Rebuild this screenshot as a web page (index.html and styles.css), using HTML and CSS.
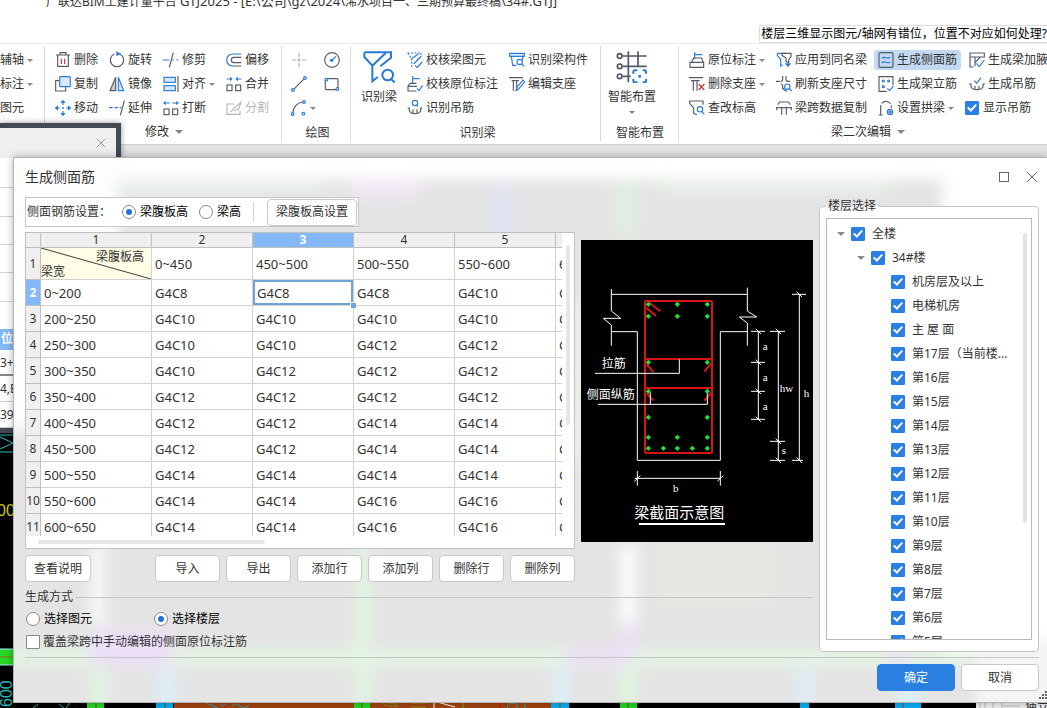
FILE: index.html
```html
<!DOCTYPE html>
<html lang="zh-CN">
<head>
<meta charset="utf-8">
<title>广联达BIM土建计量平台 GTJ2025</title>
<link rel="stylesheet" href="styles.css">
</head>
<body>
<div class="app">
  <header class="titlebar">
    <div class="caption">广联达BIM土建计量平台 <span class="path">GTJ2025 - [E:\公司\gz\2024\</span>浠水项目一、三期预算最终稿<span class="path">\34#.GTJ]</span></div>
    <a class="help" href="#">楼层三维显示图元/轴网有错位，位置不对应如何处理?</a>
  </header>

  <nav class="ribbon">
    <section class="group g-axis">
      <div class="tools">
        <button class="tool">辅轴<i class="caret"></i></button>
        <button class="tool">标注<i class="caret"></i></button>
        <button class="tool">图元</button>
      </div>
    </section>

    <section class="group g-edit">
      <div class="tools">
        <button class="tool"><svg class="ico" viewBox="0 0 48 48"><path d="M3 9H45M15 9V2H33V9M8 9V43H40V9"/><path class="r" d="M19 20V36M29 20V36"/></svg>删除</button>
        <button class="tool"><svg class="ico" viewBox="0 0 48 48"><path d="M32 6A20 20 0 1 1 16 6"/><path class="bf" d="M22 -2L36 5L22 13Z"/></svg>旋转</button>
        <button class="tool"><svg class="ico" viewBox="0 0 48 48"><path d="M31 2L19 46"/><path class="b" d="M0 24H19M27 24H33M40 24H46"/></svg>修剪</button>
        <button class="tool"><svg class="ico" viewBox="0 0 48 48"><path class="b" d="M46 6H20A18 18 0 0 0 20 42"/><path d="M46 16H24A8 8 0 0 0 24 32H46M20 42H46"/></svg>偏移</button>
        <button class="tool"><svg class="ico" viewBox="0 0 48 48"><path d="M13 14H2V45H32V33"/><rect class="b lf" x="14" y="2" width="32" height="30" rx="3"/></svg>复制</button>
        <button class="tool"><svg class="ico" viewBox="0 0 48 48"><path class="gf" d="M20 4V44H3Z"/><path class="b lf" d="M28 4V44H44Z"/></svg>镜像</button>
        <button class="tool"><svg class="ico" viewBox="0 0 48 48"><path d="M45 0V48"/><rect class="b lf" x="3" y="4" width="34" height="15"/><rect class="b lf" x="3" y="29" width="34" height="15"/></svg>对齐<i class="caret"></i></button>
        <button class="tool"><svg class="ico" viewBox="0 0 48 48"><rect x="3" y="27" width="15" height="17"/><rect x="29" y="27" width="15" height="17"/><path class="b" d="M2 9H15M46 9H33"/><path class="bf" d="M12 2L20 9L12 16ZM36 2L28 9L36 16Z"/></svg>合并</button>
        <button class="tool"><svg class="ico" viewBox="0 0 48 48"><path class="b" d="M24 4V15M24 33V44M4 24H15M33 24H44"/><path class="bf" d="M24 -1L32 9H16ZM24 49L32 39H16ZM-1 24L9 16V32ZM49 24L39 16V32Z"/><circle class="bf" cx="24" cy="24" r="3"/></svg>移动</button>
        <button class="tool"><svg class="ico" viewBox="0 0 48 48"><path d="M46 2L34 46"/><path class="b" d="M0 23H11M17 23H27M32 23H37"/></svg>延伸</button>
        <button class="tool"><svg class="ico" viewBox="0 0 48 48"><rect x="3" y="27" width="15" height="17"/><rect x="29" y="27" width="15" height="17"/><path class="b" d="M6 9H20M42 9H28"/><path class="bf" d="M8 2L0 9L8 16ZM40 2L48 9L40 16Z"/></svg>打断</button>
        <button class="tool" disabled><svg class="ico off" viewBox="0 0 48 48"><path d="M24 12H3V43H42V32M14 36C20 30 20 24 30 20L45 7L38 28L24 32"/></svg>分割</button>
      </div>
      <button class="name">修改<i class="caret big"></i></button>
    </section>

    <section class="group g-draw">
      <div class="tools">
        <button class="tool" aria-label="点"><svg class="ico off" viewBox="0 0 48 48"><path d="M24 2V16M24 32V46M2 24H16M32 24H46"/><circle cx="24" cy="24" r="3"/></svg></button>
        <button class="tool" aria-label="圆"><svg class="ico" viewBox="0 0 48 48"><circle cx="24" cy="24" r="22"/><path class="b" d="M24 24L36 13"/><circle class="bf" cx="23" cy="25" r="5"/></svg></button>
        <button class="tool" aria-label="直线"><svg class="ico" viewBox="0 0 48 48"><path d="M8 40L40 8"/><circle class="b wf" cx="6" cy="42" r="4"/><circle class="b wf" cx="42" cy="6" r="4"/></svg></button>
        <button class="tool" aria-label="矩形"><svg class="ico" viewBox="0 0 48 48"><rect x="4" y="8" width="38" height="33" rx="3"/><circle class="b wf" cx="7" cy="11" r="4"/><circle class="b wf" cx="40" cy="39" r="4"/></svg></button>
        <button class="tool" aria-label="弧"><svg class="ico" viewBox="0 0 48 48"><path d="M5 40C6 22 18 8 36 6"/><circle class="b wf" cx="5" cy="42" r="4"/><circle class="b wf" cx="39" cy="6" r="4"/><circle class="b wf" cx="37" cy="41" r="4"/></svg><i class="caret"></i></button>
      </div>
      <span class="name">绘图</span>
    </section>

    <section class="group g-ident">
      <div class="split">
        <button class="bigtool"><svg class="bigico" viewBox="0 0 96 96"><path class="b2" d="M4 4H84V20L52 46M4 4V18L28 44V91L44 78M28 44L68 6"/><circle class="b2" cx="74" cy="72" r="16"/><path class="b2" d="M84 84L95 94"/></svg>识别梁</button>
        <div class="tools">
          <button class="tool"><svg class="ico" viewBox="0 0 48 48"><path class="b" stroke-dasharray="6 4" d="M2 3H42V14L28 24M2 3L14 20V44"/><path class="b" d="M14 20L34 6M20 36L42 14M24 40L31 46L45 30"/></svg>校核梁图元</button>
          <button class="tool"><svg class="ico" viewBox="0 0 48 48"><path class="b lf" d="M2 4H46V13H2Z"/><path class="b" d="M7 13L11 40H22M42 13L40 24"/><circle class="b" cx="32" cy="30" r="8"/><path class="b" d="M38 36L45 43"/></svg>识别梁构件</button>
          <button class="tool"><svg class="ico" viewBox="0 0 48 48"><path class="b" d="M17 22V0M17 8H38"/><path d="M28 22H10L3 30V45H28M3 31H30"/><path class="b" d="M30 37L36 44L47 28"/></svg>校核原位标注</button>
          <button class="tool"><svg class="ico" viewBox="0 0 48 48"><path d="M0 5H42M8 14H30M13 14V44M23 14V44"/><path class="b" d="M42 12L47 18L28 40L21 43L24 34Z"/></svg>编辑支座</button>
          <button class="tool"><svg class="ico" viewBox="0 0 48 48"><circle class="b" cx="24" cy="9" r="8"/><path class="b" d="M28 15L33 20"/><path d="M2 24H7V32C10 44 38 44 41 32V24H46M18 28V42M30 28V42"/></svg>识别吊筋</button>
        </div>
      </div>
      <span class="name">识别梁</span>
    </section>

    <section class="group g-smart">
      <button class="bigtool"><svg class="bigico" viewBox="0 0 96 96"><path class="g2" d="M20 15H92M20 46H92M20 76H44M37 1V94M66 1V46"/><circle class="g2 wf" cx="11" cy="15" r="7"/><circle class="g2 wf" cx="11" cy="46" r="7"/><circle class="g2 wf" cx="11" cy="76" r="7"/><path class="b2" d="M64 58H56Q52 58 52 62V68M80 58H86Q90 58 90 62V68M52 84V90Q52 94 56 94H64M90 84V90Q90 94 86 94H80M71 72V80M67 76H75"/></svg>智能布置<i class="caret"></i></button>
      <span class="name">智能布置</span>
    </section>

    <section class="group g-beam">
      <div class="tools">
        <button class="tool"><svg class="ico" viewBox="0 0 48 48"><path class="b" d="M17 22V0M17 8H40"/><path d="M8 30L14 18H38L42 30M3 31H44V46H3Z"/></svg>原位标注<i class="caret"></i></button>
        <button class="tool"><svg class="ico" viewBox="0 0 48 48"><path class="b" d="M30 4H4V10L14 22V42L20 38"/><path d="M18 4H45V14L38 24V32L30 28V18L18 10Z"/><path class="bf" d="M26 34H46L36 46Z"/></svg>应用到同名梁</button>
        <button class="tool on"><svg class="ico" viewBox="0 0 48 48"><rect x="3" y="2" width="42" height="44" rx="4"/><path class="b" d="M11 19Q18 14 24 17T37 16M11 33Q18 28 24 31T37 30"/></svg>生成侧面筋</button>
        <button class="tool"><svg class="ico" viewBox="0 0 48 48"><path d="M14 45H3V3H46V15H3M18 15V43M34 15L18 32"/><path class="b" d="M22 34L31 44L46 24"/></svg>生成梁加腋</button>
        <button class="tool"><svg class="ico" viewBox="0 0 48 48"><path d="M0 5H42M6 14H32M13 14V44M24 14V44"/><path class="r" d="M29 24L46 42M46 24L29 42"/></svg>删除支座<i class="caret"></i></button>
        <button class="tool"><svg class="ico" viewBox="0 0 48 48"><path d="M0 16H12M20 0V10Q20 16 14 16M30 0V10Q30 16 36 16H42M20 40V30Q20 24 14 24"/><circle class="b" cx="34" cy="32" r="8"/><path class="b" d="M40 38L47 45M22 36Q24 45 33 45"/></svg>刷新支座尺寸</button>
        <button class="tool"><svg class="ico" viewBox="0 0 48 48"><path d="M26 46H3V2H45V28"/><circle class="b" cx="16" cy="15" r="3"/><circle class="b" cx="32" cy="15" r="3"/><circle class="b" cx="16" cy="32" r="3"/><path class="b" d="M28 37L35 44L46 30"/></svg>生成架立筋</button>
        <button class="tool"><svg class="ico" viewBox="0 0 48 48"><path d="M0 24H6V32C9 44 39 44 42 32V24H48M18 30V42M30 30V42"/><path class="b" d="M16 14L23 22L36 5"/></svg>生成吊筋</button>
        <button class="tool"><svg class="ico" viewBox="0 0 48 48"><path d="M24 44L14 40V24L2 10V3H42V14"/><circle class="b" cx="33" cy="28" r="8"/><path class="b" d="M38 34L46 43"/></svg>查改标高</button>
        <button class="tool"><svg class="ico" viewBox="0 0 48 48"><path d="M5 14L11 6H37L43 14M0 23H48M17 24V44M31 24V44M2 24V31M46 24V31"/></svg>梁跨数据复制</button>
        <button class="tool"><svg class="ico" viewBox="0 0 48 48"><path stroke-dasharray="30 5" d="M8 45V20A16 16 0 0 1 40 20V24M2 45H14"/><circle class="b lf" cx="36" cy="36" r="8"/><circle class="b" cx="36" cy="36" r="3"/></svg>设置拱梁<i class="caret"></i></button>
        <label class="check"><input type="checkbox" checked>显示吊筋</label>
      </div>
      <button class="name">梁二次编辑<i class="caret big"></i></button>
    </section>
  </nav>

  <main class="workspace">
    <svg class="canvas" viewBox="0 145 1047 563" preserveAspectRatio="xMinYMin slice">
      <rect x="0" y="145" width="1047" height="563" fill="#000"/>
      <g fill="none" stroke="#28c4c4"><path d="M0 435H14M0 452H14M0 437L13 443L0 449"/></g>
      <text class="cad yellow" x="-3" y="516">00</text>
      <rect x="-2" y="649" width="22" height="16" fill="#25d825" stroke="#a0f0ff"/><path d="M0 657H20" stroke="#8a7010"/>
      <text class="cad cyan" transform="translate(12 707) rotate(-90)">600</text>
      <g fill="none" stroke="#28a8a8"><path d="M33 708L38 704M59 704L64 708M70 703L66 708"/></g>
      <rect x="174" y="700" width="378" height="8" fill="#a24410"/>
      <g fill="#25d825"><rect x="87" y="700" width="17" height="8"/><rect x="354" y="700" width="16" height="8"/><rect x="620" y="700" width="17" height="8"/></g>
      <g fill="#08b0f4"><rect x="156" y="700" width="17" height="8"/><rect x="551" y="700" width="18" height="8"/><rect x="800" y="700" width="9" height="8"/><rect x="895" y="700" width="26" height="8"/></g>
      <path d="M96 702V708M362 702V708M628 702V708M165 702V708M560 702V708M903 702V708" stroke="#785020"/>
      <path d="M434 702V708M437 702L455 707" stroke="#fff"/>
      <path d="M463 702V708" stroke="#4c0"/><path d="M225 702V708M500 702V708" stroke="#e00"/>
      <g fill="none" stroke="#28a8a8"><path d="M206 703L218 708M220 704Q222 708 226 704M232 706Q235 702 240 706T249 705M507 708Q508 703 513 703T517 708M525 703V708"/></g>
      <g fill="none" stroke="#889010"><path d="M383 703Q384 707 399 706M388 703H396V707M410 703H426M411 707H426"/></g>
      <rect x="976" y="700" width="71" height="8" fill="#f0f0f0"/>
      <path d="M980 702V708M985 702V708M993 702V708M1002 702V708M1002 706H1020" stroke="#bbb"/>
      <text class="dock" x="1025" y="712">独立</text>
    </svg>
  </main>
</div>

<aside class="panel">
  <div class="panel-head"><button class="close" aria-label="关闭"><svg viewBox="0 0 12 12"><path d="M2 2L10 10M10 2L2 10"/></svg></button></div>
  <div class="panel-lines"><span></span><span></span><span></span><span></span><span></span><span></span></div>
  <div class="panel-col">位</div>
  <div class="panel-row strong">3+</div>
  <div class="panel-row">4,E</div>
  <div class="panel-row">39;</div>
</aside>

<div class="dialog" role="dialog" aria-labelledby="dlg-title">
  <svg class="glass" viewBox="13 157 1034 545" preserveAspectRatio="none" aria-hidden="true">
    <defs><filter id="soft" x="-10%" y="-10%" width="120%" height="120%"><feGaussianBlur stdDeviation="7"/></filter></defs>
    <rect x="13" y="157" width="1034" height="545" fill="#e4e4e4"/>
    <g filter="url(#soft)">
      <rect x="-20" y="130" width="1100" height="48" fill="#fff"/>
      <rect x="-20" y="130" width="138" height="300" fill="#fdfdfe"/>
      <rect x="942" y="130" width="140" height="520" fill="#fff"/>
      <rect x="975" y="640" width="90" height="90" fill="#f4f4f4"/>
      <rect x="120" y="180" width="200" height="12" fill="#e9f1e9"/>
      <rect x="350" y="178" width="70" height="18" fill="#f1e8f4"/>
      <rect x="495" y="185" width="14" height="60" fill="#dfe4f6"/>
      <rect x="620" y="176" width="14" height="60" fill="#e0f2e0"/>
      <rect x="660" y="178" width="230" height="14" fill="#e8efe8"/>
      <rect x="565" y="300" width="20" height="160" fill="#e8f2e8"/>
      <rect x="90" y="545" width="14" height="80" fill="#fafafa"/>
      <rect x="620" y="545" width="16" height="80" fill="#fdfdfc"/>
      <rect x="355" y="545" width="14" height="160" fill="#e2f6e2"/>
      <rect x="660" y="545" width="110" height="60" fill="#e7e8e2"/>
      <rect x="-20" y="650" width="990" height="15" fill="#e4f6e4"/>
      <rect x="90" y="630" width="80" height="34" fill="#ecdff8"/>
      <rect x="565" y="650" width="60" height="14" fill="#ecdff8"/>
      <rect x="621" y="624" width="14" height="34" fill="#ecdff8"/>
      <rect x="890" y="650" width="18" height="12" fill="#ecdff8"/>
      <rect x="90" y="668" width="14" height="50" fill="#e0f6e0"/>
      <rect x="620" y="668" width="16" height="50" fill="#e0f6e0"/>
      <rect x="158" y="668" width="14" height="50" fill="#dcf1fb"/>
      <rect x="554" y="668" width="14" height="50" fill="#dcf1fb"/>
      <rect x="798" y="668" width="12" height="50" fill="#dcf1fb"/>
      <rect x="898" y="668" width="20" height="50" fill="#dcf1fb"/>
    </g>
  </svg>

  <header class="dlg-head">
    <h1 id="dlg-title">生成侧面筋</h1>
    <button class="winbtn" aria-label="最大化"><svg viewBox="0 0 24 24"><rect x="3" y="3" width="18" height="18"/></svg></button>
    <button class="winbtn" aria-label="关闭"><svg viewBox="0 0 24 24"><path d="M2 2L22 22M22 2L2 22"/></svg></button>
  </header>

  <div class="dlg-body">
    <div class="left">
      <div class="settings">
        <span class="lead">侧面钢筋设置：</span>
        <label class="opt"><input type="radio" name="by" checked>梁腹板高</label>
        <label class="opt"><input type="radio" name="by">梁高</label>
        <span class="rule"></span>
        <button class="btn">梁腹板高设置</button>
      </div>

      <div class="pair">
        <div class="sheet">
          <div class="scroller">
            <table>
              <colgroup><col class="c0"><col class="c1"><col><col><col><col><col></colgroup>
              <thead><tr><th></th><th>1</th><th>2</th><th class="cur">3</th><th>4</th><th>5</th><th>6</th></tr></thead>
              <tbody>
                <tr class="tall"><th>1</th><td class="diag"><div><span>梁腹板高</span><span>梁宽</span></div></td><td>0~450</td><td>450~500</td><td>500~550</td><td>550~600</td><td>600~650</td></tr>
                <tr><th class="cur">2</th><td>0~200</td><td>G4C8</td><td class="sel">G4C8</td><td>G4C8</td><td>G4C10</td><td>G4C10</td></tr>
                <tr><th>3</th><td>200~250</td><td>G4C10</td><td>G4C10</td><td>G4C10</td><td>G4C10</td><td>G4C10</td></tr>
                <tr><th>4</th><td>250~300</td><td>G4C10</td><td>G4C10</td><td>G4C12</td><td>G4C12</td><td>G4C12</td></tr>
                <tr><th>5</th><td>300~350</td><td>G4C10</td><td>G4C12</td><td>G4C12</td><td>G4C12</td><td>G4C12</td></tr>
                <tr><th>6</th><td>350~400</td><td>G4C12</td><td>G4C12</td><td>G4C12</td><td>G4C12</td><td>G4C12</td></tr>
                <tr><th>7</th><td>400~450</td><td>G4C12</td><td>G4C12</td><td>G4C14</td><td>G4C14</td><td>G4C14</td></tr>
                <tr><th>8</th><td>450~500</td><td>G4C12</td><td>G4C12</td><td>G4C14</td><td>G4C14</td><td>G4C14</td></tr>
                <tr><th>9</th><td>500~550</td><td>G4C14</td><td>G4C14</td><td>G4C14</td><td>G4C14</td><td>G4C14</td></tr>
                <tr><th>10</th><td>550~600</td><td>G4C14</td><td>G4C14</td><td>G4C16</td><td>G4C16</td><td>G4C16</td></tr>
                <tr><th>11</th><td>600~650</td><td>G4C14</td><td>G4C14</td><td>G4C16</td><td>G4C16</td><td>G4C16</td></tr>
              </tbody>
            </table>
          </div>
          <div class="vbar"><span></span></div>
          <div class="hbar"><span></span></div>
        </div>

        <svg class="diagram" viewBox="9 15 696 906" role="img" aria-label="梁截面示意图">
          <rect x="9" y="15" width="696" height="906" fill="#000"/>
          <g fill="none" stroke="#fff" stroke-width="3">
            <path d="M100 178H508M100 162V228L128 250H76L100 270V332M508 158V228L536 246H484L508 264V332M100 290H178V676H427V290H508"/>
            <path d="M541 289V553M601 289V676M664 178V676M519 289H561M519 382H561M519 469H561M519 553H561M576 289H621M576 619H621M576 676H621M642 178H684M642 676H675"/>
            <path d="M533 281L549 297M533 374L549 390M533 461L549 477M533 545L549 561M593 281L609 297M593 611L609 627M593 668L609 684M656 170L672 186M656 668L672 684"/>
            <path d="M178 708V752M427 708V752M170 730H427M169 739L187 722M418 739L436 722"/>
          </g>
          <g fill="none" stroke="#d81414" stroke-width="6">
            <rect x="201" y="198" width="201" height="456" rx="3"/>
            <path d="M201 372H402M201 459H402M214 203L247 229M205 218L234 243M206 388L226 411M399 386L379 410M206 475L226 497M399 474L379 497"/>
          </g>
          <g fill="none" stroke="#fff" stroke-width="3"><path d="M51 415H304V372M60 508H388V472M217 508V472"/></g>
          <g fill="#20e030">
            <path id="bar" d="M211 200L219 208L211 216L203 208Z"/>
            <use href="#bar" x="87"/><use href="#bar" x="177"/>
            <use href="#bar" y="36"/><use href="#bar" x="87" y="36"/><use href="#bar" x="177" y="36"/>
            <use href="#bar" y="174"/><use href="#bar" x="177" y="174"/>
            <use href="#bar" y="261"/><use href="#bar" x="177" y="261"/>
            <use href="#bar" y="339"/><use href="#bar" x="177" y="339"/>
            <use href="#bar" y="399"/><use href="#bar" x="87" y="399"/><use href="#bar" x="177" y="399"/>
            <use href="#bar" y="432"/><use href="#bar" x="45" y="432"/><use href="#bar" x="87" y="432"/><use href="#bar" x="132" y="432"/><use href="#bar" x="177" y="432"/>
          </g>
          <g class="note"><text x="71" y="399">拉筋</text><text x="26" y="492">侧面纵筋</text></g>
          <text class="fig" x="169" y="849">梁截面示意图</text>
          <path d="M183 867H441" stroke="#fff" stroke-width="6"/>
          <g class="dim"><text x="554" y="345">a</text><text x="554" y="438">a</text><text x="554" y="525">a</text><text x="605" y="472">hw</text><text x="677" y="487">h</text><text x="611" y="656">s</text><text x="285" y="770">b</text></g>
        </svg>
      </div>

      <div class="actions">
        <button class="btn">查看说明</button>
        <span class="spring"></span>
        <button class="btn">导入</button>
        <button class="btn">导出</button>
        <button class="btn">添加行</button>
        <button class="btn">添加列</button>
        <button class="btn">删除行</button>
        <button class="btn">删除列</button>
      </div>

      <div class="mode" role="group" aria-labelledby="mode-name">
        <div class="mode-head"><span id="mode-name">生成方式</span></div>
        <div class="mode-row">
          <label class="opt"><input type="radio" name="mode">选择图元</label>
          <label class="opt"><input type="radio" name="mode" checked>选择楼层</label>
        </div>
        <label class="check"><input type="checkbox">覆盖梁跨中手动编辑的侧面原位标注筋</label>
      </div>
    </div>

    <fieldset class="floors">
      <legend>楼层选择</legend>
      <div class="tree">
        <ul>
          <li><i class="caret big"></i><label class="check"><input type="checkbox" checked>全楼</label></li>
          <li class="l2"><i class="caret big"></i><label class="check"><input type="checkbox" checked>34#楼</label></li>
          <li class="l3"><label class="check"><input type="checkbox" checked>机房层及以上</label></li>
          <li class="l3"><label class="check"><input type="checkbox" checked>电梯机房</label></li>
          <li class="l3"><label class="check"><input type="checkbox" checked>主 屋 面</label></li>
          <li class="l3"><label class="check"><input type="checkbox" checked>第17层（当前楼...</label></li>
          <li class="l3"><label class="check"><input type="checkbox" checked>第16层</label></li>
          <li class="l3"><label class="check"><input type="checkbox" checked>第15层</label></li>
          <li class="l3"><label class="check"><input type="checkbox" checked>第14层</label></li>
          <li class="l3"><label class="check"><input type="checkbox" checked>第13层</label></li>
          <li class="l3"><label class="check"><input type="checkbox" checked>第12层</label></li>
          <li class="l3"><label class="check"><input type="checkbox" checked>第11层</label></li>
          <li class="l3"><label class="check"><input type="checkbox" checked>第10层</label></li>
          <li class="l3"><label class="check"><input type="checkbox" checked>第9层</label></li>
          <li class="l3"><label class="check"><input type="checkbox" checked>第8层</label></li>
          <li class="l3"><label class="check"><input type="checkbox" checked>第7层</label></li>
          <li class="l3"><label class="check"><input type="checkbox" checked>第6层</label></li>
          <li class="l3"><label class="check"><input type="checkbox" checked>第5层</label></li>
        </ul>
        <div class="treebar"></div>
      </div>
    </fieldset>
  </div>

  <footer class="dlg-foot">
    <button class="btn primary">确定</button>
    <button class="btn">取消</button>
  </footer>
  <svg class="grip" viewBox="0 0 8 8" aria-hidden="true"><path d="M6 0h2v2h-2zM3 3h2v2h-2zM6 3h2v2h-2zM0 6h2v2h-2zM3 6h2v2h-2zM6 6h2v2h-2z"/></svg>
</div>
</body>
</html>
```

FILE: styles.css
```css
* { box-sizing: border-box; }
body {
  margin: 0;
  position: relative;
  min-height: 100vh;
  overflow: hidden;
  font: 12px/16px "Noto Sans", "Noto Sans CJK SC", sans-serif;
  color: #333;
}
button {
  font: inherit;
  color: inherit;
  border: 0;
  background: none;
  padding: 0;
  white-space: nowrap;
}
svg { display: block; }

/* main window */
.app { display: flex; flex-direction: column; height: 100vh; background: #fff; }
.titlebar {
  height: 44px;
  flex: none;
  display: flex;
  flex-direction: column;
  justify-content: space-between;
  border-bottom: 1px solid #ececec;
  overflow: hidden;
}
.caption { margin: -7px 0 0 46px; white-space: nowrap; }
.path { font-size: 13px; }
.help {
  align-self: flex-end;
  height: 18px;
  padding-left: 1px;
  border: 1px solid #ddd;
  border-right: 0;
  border-radius: 2px 0 0 2px;
  color: #000;
  text-decoration: none;
  white-space: nowrap;
}
.ribbon {
  flex: none;
  display: flex;
  height: 101px;
  padding-top: 2px;
  border-bottom: 1px solid #d0d0d0;
  overflow: hidden;
}
.group {
  flex: none;
  display: flex;
  flex-direction: column;
  justify-content: space-between;
  padding-top: 4px;
  margin-bottom: 3px;
  border-right: 1px solid #d9d9d9;
}
.tools { display: grid; grid-auto-rows: 20px; row-gap: 4px; justify-items: start; }
.tool {
  display: flex;
  align-items: center;
  gap: 3px;
  height: 20px;
}
.tool:disabled { color: #b8b8b8; }
.name { align-self: center; display: flex; align-items: center; gap: 6px; height: 19px; }
span.name { height: 17px; margin-right: 6px; }
.caret {
  width: 0;
  height: 0;
  border: 3px solid transparent;
  border-top-color: #888;
  border-bottom: 0;
}
.caret.big { border-width: 4px 4px 0; }
.g-axis { width: 45px; }
.g-edit { width: 237px; padding-left: 10px; }
.g-edit .tools { grid-template-columns: 54px 54px 63px auto; }
.g-edit .name { margin-right: 8px; }
.g-draw { width: 69px; padding-left: 9px; }
.g-draw .tools { grid-template-columns: 33px auto; }
.g-ident { width: 250px; padding-left: 10px; }
.g-ident .tools { grid-template-columns: 102px auto; }
.split { display: flex; gap: 10px; }
.g-smart { width: 78px; padding-left: 7px; }
.g-smart .bigtool { align-self: flex-start; }
.g-beam { flex: 1 0 376px; padding-left: 10px; border-right: 0; }
.g-beam .tools { grid-template-columns: 87px 98px 91px auto; }
.g-beam .tools > :nth-child(4n+3),
.g-beam .tool:nth-child(4n) { padding: 0 4px; }
.g-beam .name { margin-right: 8px; }
.on { background: #c3d9f1; border-radius: 3px; }
.bigtool { display: flex; flex-direction: column; align-items: center; }
.bigico { width: 32px; height: 32px; margin: 1px 0 6px; }
.bigtool .caret { margin-top: 6px; }

.ico { width: 16px; height: 16px; flex: none; overflow: visible; }
.ico, .bigico { fill: none; stroke: #565d69; stroke-width: 3.5; }
.ico.off { stroke: #b5b5b5; }
.ico .b { stroke: #2c7bd6; }
.ico .bf { stroke: none; fill: #2c7bd6; }
.ico .gf { fill: #c9cdd3; }
.ico .lf { fill: #d6e8fb; }
.ico .r { stroke: #d03030; }
.wf { fill: #fff; }
.b2 { stroke: #2779d8; stroke-width: 6; }
.g2 { stroke: #505866; stroke-width: 5; }

/* drawing area */
.workspace {
  flex: 1;
  min-height: 0;
  border-top: 12px solid #e3e3e3;
  background: #000;
  overflow: hidden;
}
.canvas { width: 100%; min-width: 1047px; margin-top: -12px; }
.cad { font-family: "Liberation Sans", sans-serif; font-size: 16px; }
.yellow { fill: #c8c820; }
.cyan { fill: #28b8b8; }
.dock { fill: #333; font-size: 12px; }

/* docked floating panel */
.panel {
  position: absolute;
  left: 0;
  top: 123px;
  width: 121px;
  background: #fff;
  border: 5px solid #434a54;
  border-left: 0;
  box-shadow: 0 0 6px rgba(0, 0, 0, .4);
}
.panel-head {
  display: flex;
  justify-content: flex-end;
  align-items: center;
  height: 30px;
  padding-right: 9px;
  background: #efeff0;
}
.close { width: 12px; height: 12px; }
.close svg { fill: none; stroke: #999; }
.panel-lines { display: flex; flex-direction: column; padding-top: 2px; height: 171px; }
.panel-lines span { flex: 1; border-bottom: 1px solid #d4d4d4; }
.panel-lines span:last-child { border: 0; }
.panel-col { height: 21px; padding: 2px 1px; background: #84b8f4; color: #fff; font-weight: bold; }
.panel-row { height: 26px; padding: 5px 0; border-bottom: 1px solid #ccc; }
.panel-row.strong { border-bottom: 2px solid #888; }

/* dialog */
.dialog {
  position: absolute;
  left: 13px;
  right: 0;
  top: 157px;
  padding: 0 8px 11px 11px;
  border: 1px solid #b4b4b4;
  border-right: 0;
  box-shadow: 0 0 8px rgba(0, 0, 0, .3);
}
.glass { position: absolute; inset: 0; width: 100%; height: 100%; }
.dlg-head, .dlg-body, .dlg-foot { position: relative; }
.dlg-head { display: flex; align-items: center; height: 39px; gap: 16px; padding: 0 1px 2px 0; }
.dlg-head h1 { flex: 1; margin: 0; font-size: 14px; line-height: 20px; font-weight: normal; }
.winbtn { width: 12px; height: 12px; }
.winbtn svg { fill: none; stroke: #666; stroke-width: 2; }
.dlg-body { display: flex; gap: 6px; padding-bottom: 5px; border-bottom: 1px solid #c6c6c6; }
.left { flex: 1; min-width: 0; }

.settings {
  display: flex;
  align-items: center;
  width: fit-content;
  height: 30px;
  padding: 0 1px;
  background: #fff;
  border: 1px solid #c6c6c6;
}
.lead { width: 95px; }
.settings .opt + .opt { margin-left: 11px; }
.opt, .check { display: flex; align-items: center; gap: 4px; white-space: nowrap; }
.opt { color: #000; }
.rule { width: 1px; height: 20px; margin: 0 13px 0 12px; background: #d4d4d4; }
.btn {
  height: 27px;
  min-width: 65px;
  padding: 0 8px;
  background: #fff;
  border: 1px solid #c8c8c8;
  border-radius: 4px;
}
.primary { background: #2b7fe0; border-color: #2b7fe0; color: #fff; }

input {
  appearance: none;
  flex: none;
  display: grid;
  place-items: center;
  width: 14px;
  height: 14px;
  margin: 0;
  background: #fff;
  border: 1px solid #888;
}
input[type="radio"] { border-radius: 50%; }
input[type="radio"]:checked::after {
  content: "";
  width: 6px;
  height: 6px;
  border-radius: 50%;
  background: #2070d8;
}
input[type="checkbox"] { border-radius: 1px; }
input[type="checkbox"]:checked { background: #2b7fe0; border-color: #2b7fe0; }
input[type="checkbox"]:checked::after {
  content: "";
  width: 10px;
  height: 8px;
  background: #fff;
  clip-path: polygon(0 50%, 14% 34%, 38% 64%, 86% 0, 100% 14%, 40% 100%);
}

.pair { display: flex; align-items: center; gap: 6px; margin-top: 5px; }
.sheet {
  flex: 1;
  min-width: 0;
  display: grid;
  grid-template-columns: 1fr 12px;
  grid-template-rows: 303px 12px;
  background: #fff;
  border: 1px solid #c0c0c0;
}
.scroller { overflow: hidden; }
table {
  table-layout: fixed;
  width: 631px;
  border-collapse: separate;
  border-spacing: 0;
  font-size: 13px;
  line-height: 16px;
}
col { width: 101px; }
.c0 { width: 15px; }
.c1 { width: 111px; }
th, td { padding: 0; border: solid #d2d2d2; border-width: 0 1px 1px 0; white-space: nowrap; }
th { background: #efefef; border-color: #c0c0c0; font-weight: normal; font-size: 12px; }
thead th { height: 15px; line-height: 14px; }
td { height: 26px; padding: 0 3px; }
.tall td { height: 32px; }
th.cur { background: #84b8f8; color: #fff; font-weight: bold; }
td.diag {
  padding: 0;
  font-size: 12px;
  line-height: 15px;
  background: #fffde6 linear-gradient(to top right, transparent calc(50% - 1px), #444 50%, transparent calc(50% + 1px));
}
.diag div { display: flex; flex-direction: column; }
.diag span:first-child { align-self: flex-end; padding-right: 7px; }
td.sel { position: relative; padding: 0 4px; box-shadow: inset 0 0 0 2px #70a4d8; }
.sel::after {
  content: "";
  position: absolute;
  right: -3px;
  bottom: -3px;
  width: 5px;
  height: 5px;
  background: #70a4d8;
  border: solid #fff;
  border-width: 1px 0 0 1px;
}
.vbar { padding: 12px 4px; }
.vbar span { display: block; height: 180px; background: #e6e6e6; border-radius: 2px; }
.hbar { padding: 4px 0 4px 12px; }
.hbar span { display: block; width: 227px; height: 4px; background: #e6e6e6; border-radius: 2px; }

.diagram { flex: none; width: 232px; height: 302px; }
.note, .fig, .dim { fill: #fff; }
.note { font-size: 36px; }
.fig { font-size: 45px; }
.dim { font-family: "Liberation Serif", serif; font-size: 33px; }

.actions { display: flex; gap: 6px; margin: 6px 238px 0 0; }
.spring { flex: 1; }
.mode { padding-top: 7px; }
.mode-head { display: flex; align-items: center; gap: 3px; height: 16px; }
.mode-head::after { content: ""; flex: 1; height: 1px; background: #c6c6c6; }
.mode-row { display: flex; gap: 62px; padding: 6px 0 7px 1px; }
.mode .check { padding-left: 1px; gap: 3px; }

.floors {
  flex: none;
  position: relative;
  width: 220px;
  margin: 1px 0 0;
  padding: 4px 6px 11px;
  border: 1px solid #c6c6c6;
  border-radius: 4px;
  background: #fff;
}
.floors legend { padding: 0 2px; height: 16px; }
.tree {
  display: flex;
  height: 422px;
  overflow: hidden;
  border: 1px solid #b8b8b8;
}
.tree ul { flex: 1; list-style: none; margin: 0; padding: 3px 0 0 10px; }
.tree li { display: flex; align-items: center; gap: 6px; height: 24px; }
.tree .l2 { padding-left: 20px; }
.tree .l3 { padding-left: 54px; }
.tree .check { gap: 7px; }
.treebar { width: 4px; height: 290px; margin: 14px 4px 0 0; background: #e2e2e2; border-radius: 2px; }

.dlg-foot { display: flex; justify-content: flex-end; gap: 6px; padding-top: 6px; }
.dlg-foot .btn { width: 78px; }
.grip { position: absolute; right: 0; bottom: 3px; width: 8px; height: 8px; fill: #666; }
```
